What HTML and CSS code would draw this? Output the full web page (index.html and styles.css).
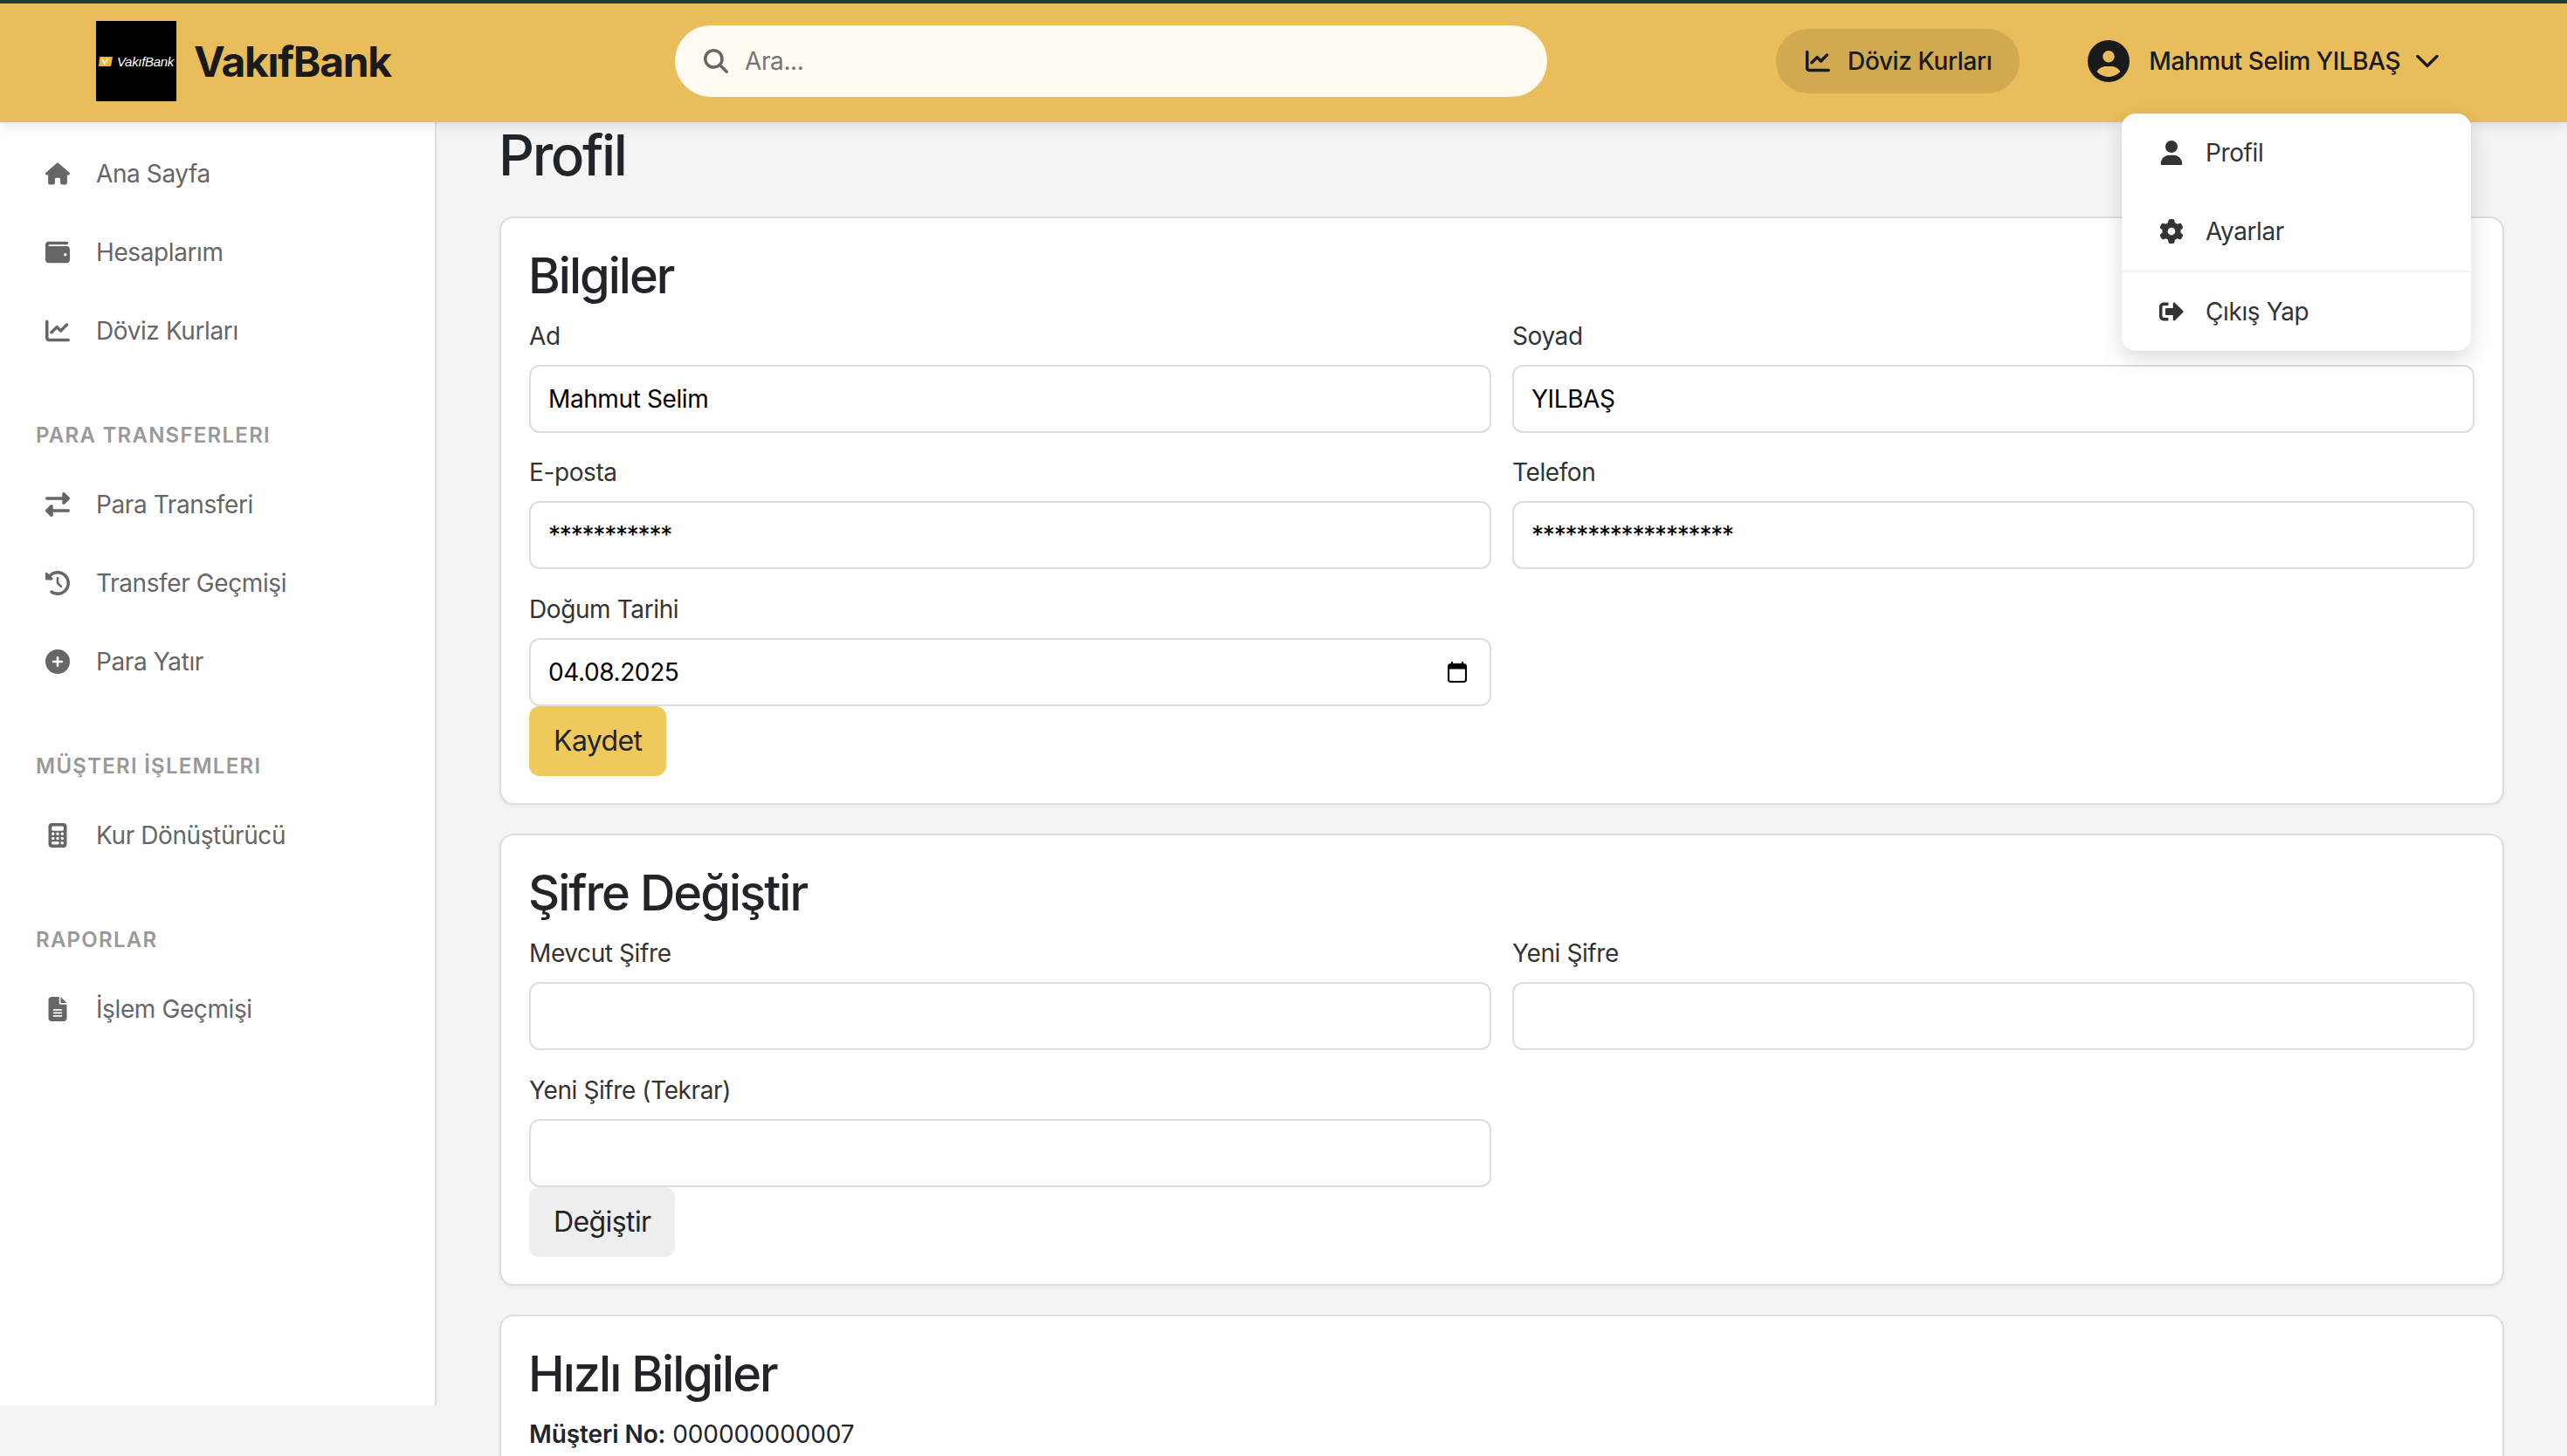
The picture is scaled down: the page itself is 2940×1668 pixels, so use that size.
FILE: index.html
```html
<!DOCTYPE html>
<html lang="tr">
<head>
<meta charset="utf-8">
<title>VakıfBank - Profil</title>
<link rel="stylesheet" href="styles.css">
</head>
<body>
<svg class="defs" aria-hidden="true">
  <symbol id="i-home" viewBox="0 0 576 512"><path d="M575.8 255.5c0 18-15 32.1-32 32.1h-32l.7 160.2c0 2.7-.2 5.4-.5 8.1V472c0 22.1-17.9 40-40 40H456c-1.1 0-2.2 0-3.3-.1c-1.4 .1-2.8 .1-4.2 .1H416 392c-22.1 0-40-17.9-40-40V448 384c0-17.7-14.3-32-32-32H256c-17.7 0-32 14.3-32 32v64 24c0 22.1-17.9 40-40 40H160 128.1c-1.5 0-3-.1-4.5-.2c-1.2 .1-2.4 .2-3.6 .2H104c-22.1 0-40-17.9-40-40V360c0-.9 0-1.9 .1-2.8V287.6H32c-18 0-32-14-32-32.1c0-9 3-17 10-24L266.4 8c7-7 15-8 22-8s15 2 21 7L564.8 231.5c8 7 12 15 11 24z"/></symbol>
  <symbol id="i-wallet" viewBox="0 0 512 512"><path d="M64 32C28.7 32 0 60.7 0 96V416c0 35.3 28.7 64 64 64H448c35.3 0 64-28.7 64-64V192c0-35.3-28.7-64-64-64H80c-8.8 0-16-7.2-16-16s7.2-16 16-16H448c17.7 0 32-14.3 32-32s-14.3-32-32-32H64zM416 272a32 32 0 1 1 0 64 32 32 0 1 1 0-64z"/></symbol>
  <symbol id="i-chart" viewBox="0 0 512 512"><path d="M64 64c0-17.7-14.3-32-32-32S0 46.3 0 64V400c0 44.2 35.8 80 80 80H480c17.7 0 32-14.3 32-32s-14.3-32-32-32H80c-8.8 0-16-7.2-16-16V64zm406.6 86.6c12.5-12.5 12.5-32.8 0-45.3s-32.8-12.5-45.3 0L320 210.7l-57.4-57.4c-12.5-12.5-32.8-12.5-45.3 0l-112 112c-12.5 12.5-12.5 32.8 0 45.3s32.8 12.5 45.3 0L240 221.3l57.4 57.4c12.5 12.5 32.8 12.5 45.3 0l128-128z"/></symbol>
  <symbol id="i-exchange" viewBox="0 0 512 512"><path d="M32 96l320 0V32c0-12.900 7.800-24.600 19.800-29.600s25.700-2.200 34.900 6.900l96 96c6 6 9.400 14.100 9.400 22.600s-3.400 16.600-9.400 22.600l-96 96c-9.200 9.200-22.900 11.900-34.900 6.900s-19.800-16.600-19.800-29.600V160L32 160c-17.700 0-32-14.300-32-32s14.300-32 32-32zM480 352c17.700 0 32 14.300 32 32s-14.300 32-32 32H160v64c0 12.900-7.800 24.600-19.800 29.600s-25.700 2.200-34.900-6.900l-96-96c-6-6-9.400-14.100-9.400-22.600s3.400-16.600 9.400-22.600l96-96c9.200-9.200 22.900-11.900 34.900-6.900s19.800 16.600 19.800 29.600l0 64H480z"/></symbol>
  <symbol id="i-history" viewBox="0 0 512 512"><path d="M75 75L41 41C25.900 25.900 0 36.600 0 57.900V168c0 13.300 10.700 24 24 24H134.100c21.400 0 32.100-25.900 17-41l-30.800-30.800C155 85.500 203 64 256 64c106 0 192 86 192 192s-86 192-192 192c-40.800 0-78.600-12.700-109.700-34.400c-14.500-10.100-34.400-6.600-44.600 7.900s-6.600 34.400 7.900 44.600C151.200 495 201.700 512 256 512c141.400 0 256-114.600 256-256S397.400 0 256 0C185.300 0 121.300 28.700 75 75zm181 53c-13.300 0-24 10.700-24 24V256c0 6.400 2.500 12.500 7 17l72 72c9.400 9.400 24.600 9.400 33.900 0s9.400-24.600 0-33.900l-65-65V152c0-13.300-10.700-24-24-24z"/></symbol>
  <symbol id="i-plus" viewBox="0 0 512 512"><path d="M256 512A256 256 0 1 0 256 0a256 256 0 1 0 0 512zM232 344V280H168c-13.300 0-24-10.700-24-24s10.700-24 24-24h64V168c0-13.300 10.700-24 24-24s24 10.700 24 24v64h64c13.300 0 24 10.700 24 24s-10.700 24-24 24H280v64c0 13.300-10.700 24-24 24s-24-10.700-24-24z"/></symbol>
  <symbol id="i-calc" viewBox="0 0 384 512"><path d="M64 0C28.700 0 0 28.700 0 64V448c0 35.300 28.700 64 64 64H320c35.300 0 64-28.700 64-64V64c0-35.300-28.700-64-64-64H64zM96 64H288c17.700 0 32 14.300 32 32v32c0 17.700-14.300 32-32 32H96c-17.700 0-32-14.300-32-32V96c0-17.700 14.300-32 32-32zm32 160a32 32 0 1 1 -64 0 32 32 0 1 1 64 0zM96 352a32 32 0 1 1 0-64 32 32 0 1 1 0 64zM64 416c0-17.700 14.300-32 32-32h96c17.700 0 32 14.300 32 32s-14.300 32-32 32H96c-17.700 0-32-14.300-32-32zM192 256a32 32 0 1 1 0-64 32 32 0 1 1 0 64zm32 64a32 32 0 1 1 -64 0 32 32 0 1 1 64 0zm64-64a32 32 0 1 1 0-64 32 32 0 1 1 0 64zm32 64a32 32 0 1 1 -64 0 32 32 0 1 1 64 0zM288 448a32 32 0 1 1 0-64 32 32 0 1 1 0 64z"/></symbol>
  <symbol id="i-file" viewBox="0 0 384 512"><path d="M64 0C28.700 0 0 28.700 0 64V448c0 35.300 28.700 64 64 64H320c35.300 0 64-28.700 64-64V160H256c-17.700 0-32-14.300-32-32V0H64zM256 0V128H384L256 0zM112 256H272c8.800 0 16 7.200 16 16s-7.200 16-16 16H112c-8.800 0-16-7.200-16-16s7.200-16 16-16zm0 64H272c8.800 0 16 7.200 16 16s-7.200 16-16 16H112c-8.800 0-16-7.200-16-16s7.200-16 16-16zm0 64H272c8.800 0 16 7.200 16 16s-7.200 16-16 16H112c-8.800 0-16-7.200-16-16s7.200-16 16-16z"/></symbol>
  <symbol id="i-avatar" viewBox="0 0 512 512"><path d="M399 384.200C376.900 345.800 335.400 320 288 320H224c-47.400 0-88.900 25.800-111 64.200c35.200 39.200 86.200 63.800 143 63.800s107.800-24.700 143-63.800zM0 256a256 256 0 1 1 512 0A256 256 0 1 1 0 256zm256 16a72 72 0 1 0 0-144 72 72 0 1 0 0 144z"/></symbol>
  <symbol id="i-user" viewBox="0 0 448 512"><path d="M224 256A128 128 0 1 0 224 0a128 128 0 1 0 0 256zm-45.700 48C79.800 304 0 383.800 0 482.300C0 498.700 13.300 512 29.700 512H418.300c16.400 0 29.700-13.300 29.700-29.700C448 383.800 368.200 304 269.700 304H178.300z"/></symbol>
  <symbol id="i-gear" viewBox="0 0 512 512"><path d="M495.9 166.6c3.2 8.7 .5 18.4-6.4 24.6l-43.3 39.4c1.1 8.3 1.7 16.8 1.7 25.4s-.6 17.1-1.7 25.4l43.3 39.4c6.9 6.2 9.6 15.9 6.4 24.6c-4.4 11.9-9.7 23.3-15.8 34.3l-4.7 8.1c-6.6 11-14 21.4-22.1 31.2c-5.9 7.2-15.7 9.6-24.5 6.8l-55.7-17.7c-13.4 10.3-28.2 18.9-44 25.4l-12.5 57.1c-2 9.1-9 16.3-18.2 17.8c-13.8 2.3-28 3.5-42.5 3.5s-28.7-1.2-42.5-3.5c-9.2-1.5-16.2-8.7-18.2-17.8l-12.5-57.1c-15.8-6.5-30.6-15.1-44-25.4L83.1 425.9c-8.8 2.8-18.6 .3-24.5-6.8c-8.1-9.8-15.5-20.2-22.1-31.2l-4.7-8.1c-6.1-11-11.4-22.4-15.8-34.3c-3.2-8.7-.5-18.4 6.4-24.6l43.3-39.4C64.6 273.1 64 264.6 64 256s.6-17.1 1.7-25.4L22.4 191.2c-6.9-6.2-9.6-15.9-6.4-24.6c4.4-11.9 9.7-23.3 15.8-34.3l4.7-8.1c6.6-11 14-21.4 22.1-31.2c5.9-7.2 15.7-9.6 24.5-6.8l55.7 17.7c13.4-10.3 28.2-18.9 44-25.4l12.5-57.1c2-9.1 9-16.3 18.2-17.8C227.3 1.2 241.5 0 256 0s28.7 1.2 42.5 3.5c9.2 1.5 16.2 8.7 18.2 17.8l12.5 57.1c15.8 6.5 30.6 15.1 44 25.4l55.7-17.7c8.8-2.8 18.6-.3 24.5 6.8c8.1 9.8 15.5 20.2 22.1 31.2l4.7 8.1c6.1 11 11.4 22.4 15.8 34.3zM256 336a80 80 0 1 0 0-160 80 80 0 1 0 0 160z"/></symbol>
  <symbol id="i-logout" viewBox="0 0 512 512"><path d="M497 273L329 441c-15 15-41 4.500-41-17v-96H152c-13.300 0-24-10.700-24-24v-96c0-13.300 10.700-24 24-24h136V88c0-21.400 25.900-32 41-17l168 168c9.300 9.400 9.300 24.600 0 34zM192 436v-40c0-6.600-5.400-12-12-12H96c-17.700 0-32-14.300-32-32V160c0-17.700 14.300-32 32-32h84c6.600 0 12-5.400 12-12V76c0-6.600-5.400-12-12-12H96c-53 0-96 43-96 96v192c0 53 43 96 96 96h84c6.600 0 12-5.400 12-12z"/></symbol>
  <symbol id="i-search" viewBox="0 0 512 512"><path d="M416 208c0 45.900-14.900 88.300-39.500 122.500l126.800 126.900c12.500 12.500 12.500 32.800 0 45.300s-32.800 12.500-45.300 0L330.700 376.500C296.500 401.100 254.100 416 208 416 93.100 416 0 322.900 0 208S93.100 0 208 0 416 93.100 416 208zM208 352a144 144 0 1 0 0-288 144 144 0 1 0 0 288z"/></symbol>
</svg>

<header class="topbar">
  <a class="brand">
    <span class="logo">
      <svg class="logo-mark" viewBox="0 0 16 11"><path d="M2 0h14l-1.600 9.500q-.2 1.500-1.700 1.500H0L1 1q.1-1 1-1z" fill="#f2b632"/><path d="M4 2l2.500 6L11 2" fill="none" stroke="#fff" stroke-width="1.600"/></svg>
      <span class="logo-text">VakıfBank</span>
    </span>
    <span class="brand-name">VakıfBank</span>
  </a>
  <div class="search">
    <svg class="search-icon"><use href="#i-search"/></svg>
    <input class="search-input" type="text" placeholder="Ara...">
  </div>
  <div class="top-actions">
    <a class="rates-btn"><svg class="icon"><use href="#i-chart"/></svg><span>Döviz Kurları</span></a>
    <a class="user-menu">
      <svg class="avatar"><use href="#i-avatar"/></svg>
      <span class="user-name">Mahmut Selim YILBAŞ</span>
      <svg class="chevron" viewBox="0 0 26 16"><path d="M2 2.500l11 11 11-11" fill="none" stroke="currentColor" stroke-width="3.400" stroke-linecap="round" stroke-linejoin="round"/></svg>
    </a>
  </div>
  <nav class="dropdown">
    <a class="drop-item"><svg class="icon"><use href="#i-user"/></svg>Profil</a>
    <a class="drop-item"><svg class="icon"><use href="#i-gear"/></svg>Ayarlar</a>
    <a class="drop-item drop-last"><svg class="icon"><use href="#i-logout"/></svg>Çıkış Yap</a>
  </nav>
</header>

<div class="layout">
  <aside class="sidebar">
    <a class="nav-item"><svg class="icon"><use href="#i-home"/></svg>Ana Sayfa</a>
    <a class="nav-item"><svg class="icon"><use href="#i-wallet"/></svg>Hesaplarım</a>
    <a class="nav-item"><svg class="icon"><use href="#i-chart"/></svg>Döviz Kurları</a>
    <div class="nav-title">PARA TRANSFERLERI</div>
    <a class="nav-item"><svg class="icon"><use href="#i-exchange"/></svg>Para Transferi</a>
    <a class="nav-item"><svg class="icon"><use href="#i-history"/></svg>Transfer Geçmişi</a>
    <a class="nav-item"><svg class="icon"><use href="#i-plus"/></svg>Para Yatır</a>
    <div class="nav-title">MÜŞTERI İŞLEMLERI</div>
    <a class="nav-item"><svg class="icon"><use href="#i-calc"/></svg>Kur Dönüştürücü</a>
    <div class="nav-title">RAPORLAR</div>
    <a class="nav-item"><svg class="icon"><use href="#i-file"/></svg>İşlem Geçmişi</a>
  </aside>

  <main class="content">
    <h1 class="page-title">Profil</h1>

    <section class="card">
      <h2 class="card-title">Bilgiler</h2>
      <div class="form-grid">
        <div class="field"><label class="field-label">Ad</label><input class="field-input" type="text" value="Mahmut Selim"></div>
        <div class="field"><label class="field-label">Soyad</label><input class="field-input" type="text" value="YILBAŞ"></div>
        <div class="field"><label class="field-label">E-posta</label><input class="field-input stars" type="text" value="***********"></div>
        <div class="field"><label class="field-label">Telefon</label><input class="field-input stars" type="text" value="******************"></div>
        <div class="field">
          <label class="field-label">Doğum Tarihi</label>
          <div class="date-wrap">
            <input class="field-input" type="text" value="04.08.2025">
            <svg class="calendar" viewBox="0 0 22 24"><path d="M5 0v3M17 0v3" stroke="#000" stroke-width="2"/><rect x="1" y="3" width="20" height="20" rx="2.500" fill="none" stroke="#000" stroke-width="2.200"/><rect x="1" y="3" width="20" height="5.500" fill="#000"/></svg>
          </div>
        </div>
      </div>
      <button class="btn btn-primary" type="button">Kaydet</button>
    </section>

    <section class="card">
      <h2 class="card-title">Şifre Değiştir</h2>
      <div class="form-grid">
        <div class="field"><label class="field-label">Mevcut Şifre</label><input class="field-input" type="text"></div>
        <div class="field"><label class="field-label">Yeni Şifre</label><input class="field-input" type="text"></div>
        <div class="field"><label class="field-label">Yeni Şifre (Tekrar)</label><input class="field-input" type="text"></div>
      </div>
      <button class="btn btn-muted" type="button">Değiştir</button>
    </section>

    <section class="card">
      <h2 class="card-title">Hızlı Bilgiler</h2>
      <p class="info"><strong>Müşteri No:</strong> 000000000007</p>
    </section>
  </main>
</div>
</body>
</html>
```

FILE: styles.css
```css
* { box-sizing: border-box; }

html, body {
  margin: 0;
  height: 100%;
  overflow: hidden;
}

body {
  background: #f4f4f4;
  color: #212529;
  font-family: Inter, "Noto Sans", sans-serif;
  font-size: 28px;
  letter-spacing: -.4px;
}

.defs { display: none; }

.icon {
  width: 28px;
  height: 28px;
  flex: none;
  fill: currentColor;
}

.topbar {
  position: relative;
  z-index: 5;
  height: 140px;
  display: flex;
  align-items: center;
  padding: 0 147px 4px 110px;
  background: #e9bd5b;
  border-top: 4px solid #2c393c;
  box-shadow: 0 4px 12px rgba(0, 0, 0, .1);
  color: #1a1a1a;
}

.brand {
  width: 663px;
  flex: none;
  display: flex;
  align-items: center;
  gap: 20px;
}

.logo {
  width: 92px;
  height: 92px;
  flex: none;
  display: flex;
  align-items: center;
  justify-content: center;
  gap: 5px;
  background: #000;
}

.logo-mark { width: 16px; height: 11px; }

.logo-text {
  color: #fff;
  font-family: "Liberation Sans", sans-serif;
  font-size: 15px;
  font-style: italic;
  letter-spacing: -.3px;
}

.brand-name {
  font-size: 48px;
  font-weight: 700;
  letter-spacing: -1.4px;
}

.search {
  width: 999px;
  height: 82px;
  flex: none;
  display: flex;
  align-items: center;
  gap: 19px;
  padding: 0 33px;
  background: #fffaf0;
  border-radius: 41px;
}

.search-icon {
  width: 28px;
  height: 28px;
  flex: none;
  fill: #666;
}

.search-input {
  flex: 1;
  min-width: 0;
  border: 0;
  outline: 0;
  padding: 0;
  background: transparent;
  font: inherit;
  letter-spacing: inherit;
}

.search-input::placeholder { color: #757575; opacity: 1; }

.top-actions {
  margin-left: auto;
  display: flex;
  align-items: center;
  gap: 78px;
}

.rates-btn {
  height: 74px;
  display: flex;
  align-items: center;
  gap: 20px;
  padding: 0 32px 0 34px;
  background: rgba(0, 0, 0, .1);
  border-radius: 37px;
  font-weight: 500;
}

.user-menu {
  display: flex;
  align-items: center;
  gap: 22px;
  font-weight: 500;
}

.user-name { letter-spacing: -.5px; }

.avatar { width: 48px; height: 48px; fill: currentColor; }

.chevron { width: 26px; height: 16px; margin-left: -4px; }

.dropdown {
  position: absolute;
  top: 126px;
  right: 110px;
  width: 400px;
  background: #fff;
  border-radius: 16px;
  box-shadow: 0 8px 24px rgba(0, 0, 0, .15);
  overflow: hidden;
  color: #333;
}

.drop-item {
  height: 90px;
  display: flex;
  align-items: center;
  gap: 25px;
  padding-left: 43px;
}

.drop-last {
  height: 92px;
  border-top: 2px solid #f4f4f4;
}

.layout {
  display: flex;
  align-items: flex-start;
  height: 1528px;
}

.sidebar {
  width: 500px;
  height: 1470px;
  flex: none;
  padding-top: 14px;
  background: #fff;
  border-right: 2px solid #e0e0e0;
}

.nav-item {
  height: 90px;
  display: flex;
  align-items: center;
  gap: 30px;
  padding-left: 52px;
  color: #666;
}

.nav-title {
  height: 30px;
  line-height: 30px;
  margin: 60px 0 19px;
  padding-left: 41px;
  color: #999;
  font-size: 24px;
  font-weight: 600;
  letter-spacing: 1.250px;
}

.content {
  flex: 1;
  min-width: 0;
  height: 100%;
  overflow: hidden;
  padding: 0 72px;
}

.page-title {
  margin: 0 0 31.5px -1px;
  font-size: 64px;
  line-height: 76px;
  font-weight: 500;
  letter-spacing: -2.400px;
}

.card {
  margin-bottom: 33.5px;
  padding: 32px 32px 31px;
  background: #fff;
  border: 2px solid #ddd;
  border-radius: 16px;
  box-shadow: 0 2px 4px rgba(0, 0, 0, .05);
}

.card-title {
  margin: 0 0 18px -1px;
  font-size: 56px;
  line-height: 68px;
  font-weight: 500;
  letter-spacing: -2px;
}

.form-grid {
  display: grid;
  grid-template-columns: 1fr 1fr;
  column-gap: 24px;
  row-gap: 28.5px;
}

.field-label {
  display: block;
  margin-bottom: 16px;
  line-height: 34px;
  color: #333;
}

.field-input {
  display: block;
  width: 100%;
  height: 78px;
  padding: 0 20px;
  background: #fff;
  border: 2px solid #ddd;
  border-radius: 12px;
  outline: 0;
  color: #000;
  font: inherit;
  letter-spacing: inherit;
}

.stars { letter-spacing: -1.200px; }

.date-wrap { position: relative; }

.calendar {
  position: absolute;
  top: 27px;
  right: 28px;
  width: 22px;
  height: 24px;
}

.btn {
  display: block;
  height: 80px;
  padding: 0 28px;
  border: 0;
  border-radius: 12px;
  color: #212529;
  font: inherit;
  font-size: 32px;
  letter-spacing: -.6px;
}

.btn-primary { background: #efc95b; }

.btn-muted { background: #eee; }

.info { margin: 0; letter-spacing: -.1px; }

.info strong { font-weight: 600; }
```
